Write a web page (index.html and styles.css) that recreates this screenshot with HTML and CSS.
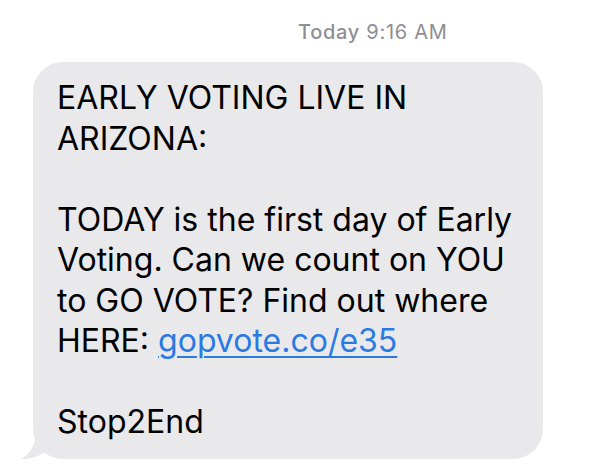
FILE: index.html
```html
<!DOCTYPE html>
<html>
<head>
<meta charset="utf-8">
<link rel="stylesheet" href="styles.css">
</head>
<body>
<div class="thread">
  <div class="stamp"><span class="day">Today</span> 9:16 AM</div>
  <div class="bubble">
    <p class="msg">EARLY VOTING LIVE IN<br>ARIZONA:<br><br>TODAY is the first day of Early<br>Voting. Can we count on YOU<br>to GO VOTE? Find out where<br>HERE: <a class="link" href="#">gopvote.co/e35</a><br><br>Stop2End</p>
    <svg class="tail" width="30" height="26" viewBox="0 0 30 26">
      <path d="M16 0 L16 4 C16 12 10 20 2 25 C10 25.5 18 23 24 19 L30 19 L30 0 Z" fill="#e9e9eb"/>
    </svg>
  </div>
</div>
</body>
</html>
```
FILE: styles.css
```css
html, body {
  margin: 0;
  padding: 0;
  background: #ffffff;
}
.thread {
  width: 592px;
  height: 475px;
  display: flex;
  flex-direction: column;
  font-family: Inter, "Liberation Sans", sans-serif;
}
.stamp {
  margin: 17px 0 0 298px;
  height: 30px;
  font-size: 20px;
  letter-spacing: 0.7px;
  line-height: 30px;
  color: #8e8e93;
  white-space: nowrap;
}
.day {
  font-weight: 500;
}
.bubble {
  position: relative;
  margin: 15px 0 0 33px;
  width: 510px;
  box-sizing: border-box;
  padding: 16px 0 16px 24px;
  background: #e9e9eb;
  border-radius: 30px;
}
.msg {
  margin: 0;
  font-size: 32px;
  line-height: 40.5px;
  color: #000;
  white-space: nowrap;
}
.link {
  color: #2a7ae2;
  text-decoration: underline;
  text-decoration-thickness: 2px;
  text-underline-offset: 4px;
}
.tail {
  position: absolute;
  left: -14px;
  bottom: -1px;
}
```
